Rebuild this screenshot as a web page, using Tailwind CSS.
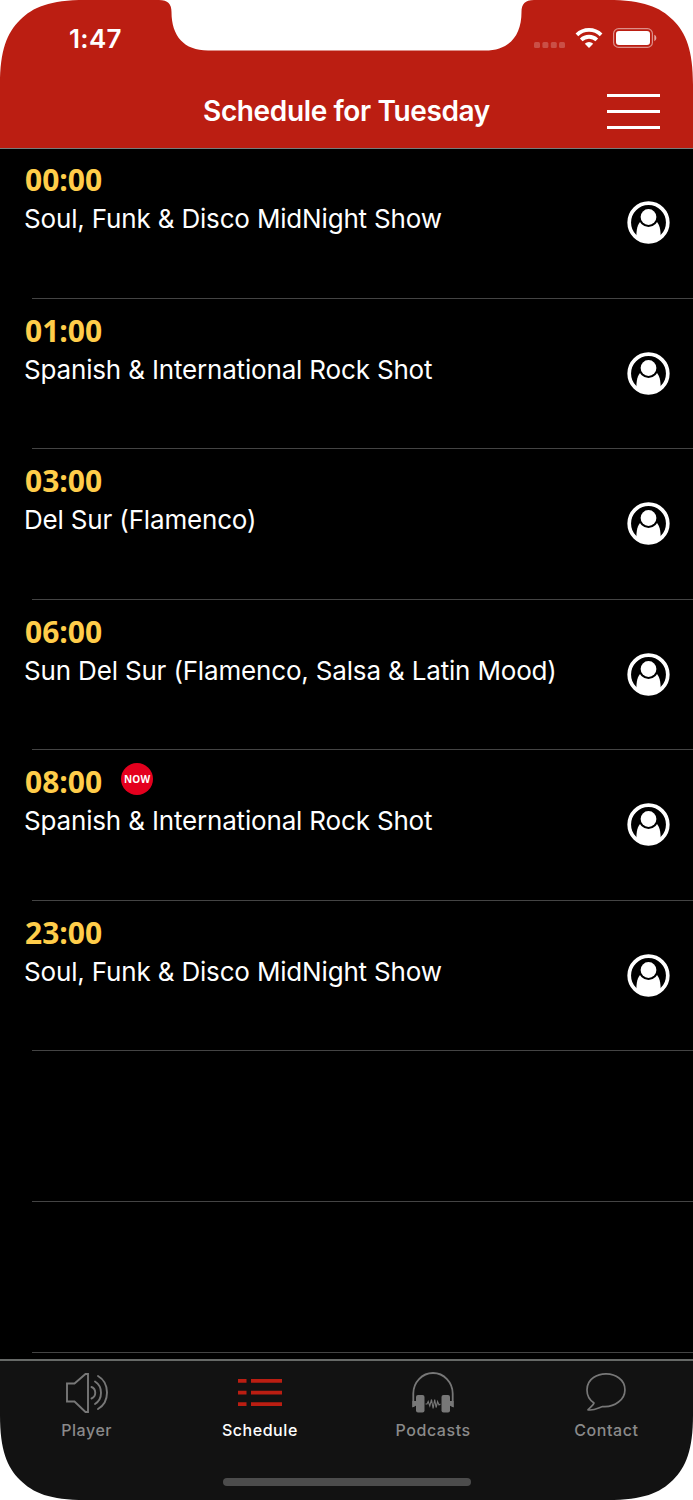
<!DOCTYPE html>
<html lang="en">
  <head>
    <meta charset="UTF-8" />
    <meta name="viewport" content="width=device-width, initial-scale=1.0" />
    <title>Schedule for Tuesday</title>
    <!-- Tailwind CSS CDN -->
    <script src="https://cdn.jsdelivr.net/npm/@tailwindcss/browser@4"></script>
  </head>
  <body class="bg-white">
    <div class="relative flex flex-col w-[693px] h-[1500px] overflow-hidden bg-black font-['Inter',sans-serif] text-white">
      <!-- Header -->
      <header class="shrink-0 h-[149px] bg-[#bb1e12] border-b border-[#777b79]">
        <div class="flex items-center justify-between h-[76px] pl-[69px] pr-[36px]">
          <span class="text-[26px] font-semibold tracking-[0.3px]">1:47</span>
          <div class="flex items-center gap-[10px]">
            <svg class="w-[32px] h-[20px]" viewBox="0 0 32 20" fill="#fff" fill-opacity=".22">
              <rect x="1" y="14" width="6" height="6" rx="1.5" />
              <rect x="9.4" y="14" width="6" height="6" rx="1.5" />
              <rect x="17.8" y="14" width="6" height="6" rx="1.5" />
              <rect x="26" y="14" width="6" height="6" rx="1.5" />
            </svg>
            <svg class="w-[28px] h-[20px]" viewBox="0 0 28 20" fill="none" stroke="#fff" stroke-width="3.8">
              <path d="M1.900 6.900a17.200 17.200 0 0 1 24.200 0" />
              <path d="M6.200 11.900a11.200 11.200 0 0 1 15.600 0" />
              <path d="M14 20l-4.200-4.300a6.200 6.200 0 0 1 8.400 0z" fill="#fff" stroke="none" />
            </svg>
            <svg class="w-[44px] h-[20px]" viewBox="0 0 44 20">
              <rect x="0.6" y="0.6" width="38.8" height="18.8" rx="5" fill="none" stroke="#fff" stroke-opacity=".5" stroke-width="1.200" />
              <rect x="3" y="3" width="34" height="14" rx="3" fill="#fff" />
              <path d="M41.300 6.800c2.700 1.200 2.700 5.200 0 6.400z" fill="#fff" fill-opacity=".6" />
            </svg>
          </div>
        </div>
        <div class="grid grid-cols-[1fr_auto_1fr] items-center h-[70px]">
          <h1 class="col-start-2 text-[28px] font-semibold tracking-[-0.370px] whitespace-nowrap">Schedule for Tuesday</h1>
          <button class="flex flex-col gap-[13px] w-[53px] mr-[33px] justify-self-end" aria-label="Menu">
            <span class="h-[3px] w-full bg-white"></span>
            <span class="h-[3px] w-full bg-white"></span>
            <span class="h-[3px] w-full bg-white"></span>
          </button>
        </div>
      </header>

      <svg class="hidden">
        <symbol id="person" viewBox="0 0 43 43">
          <circle cx="21.5" cy="21.5" r="19.300" fill="none" stroke="#fff" stroke-width="3.700" />
          <path d="M9.300 37.500c0-9 1-14.500 5-17.500h14.400c4 3 5 8.500 5 17.500C27 42.500 16 42.500 9.300 37.500z" fill="#fff" />
          <circle cx="21.500" cy="16" r="10" fill="#000" />
          <circle cx="21.500" cy="16" r="7.900" fill="#fff" />
        </symbol>
      </svg>

      <!-- Programme list -->
      <main class="h-[1210px] shrink-0 overflow-hidden">
        <ul class="tracking-[-0.170px]">
          <li class="flex justify-between h-[148.500px] pl-6 pr-[23px]">
            <div class="pt-[11px]">
              <p class="pl-px font-['Open_Sans',sans-serif] text-[30px] leading-[40px] font-bold tracking-normal text-[#ffcd4a]">00:00</p>
              <p class="text-[26px] leading-[37px] whitespace-nowrap">Soul, Funk &amp; Disco MidNight Show</p>
            </div>
            <svg class="w-[43px] h-[43px] mt-[52px]"><use href="#person" /></svg>
          </li>
          <li class="flex justify-between h-[150.600px] pl-6 pr-[23px] bg-[linear-gradient(#444,#444)] bg-no-repeat bg-[position:32px_0] bg-[size:661px_1px]">
            <div class="pt-[13px]">
              <p class="pl-px font-['Open_Sans',sans-serif] text-[30px] leading-[40px] font-bold tracking-normal text-[#ffcd4a]">01:00</p>
              <p class="text-[26px] leading-[37px] whitespace-nowrap">Spanish &amp; International Rock Shot</p>
            </div>
            <svg class="w-[43px] h-[43px] mt-[54px]"><use href="#person" /></svg>
          </li>
          <li class="flex justify-between h-[150.600px] pl-6 pr-[23px] bg-[linear-gradient(#444,#444)] bg-no-repeat bg-[position:32px_0] bg-[size:661px_1px]">
            <div class="pt-[13px]">
              <p class="pl-px font-['Open_Sans',sans-serif] text-[30px] leading-[40px] font-bold tracking-normal text-[#ffcd4a]">03:00</p>
              <p class="text-[26px] leading-[37px] whitespace-nowrap">Del Sur (Flamenco)</p>
            </div>
            <svg class="w-[43px] h-[43px] mt-[54px]"><use href="#person" /></svg>
          </li>
          <li class="flex justify-between h-[150.600px] pl-6 pr-[23px] bg-[linear-gradient(#444,#444)] bg-no-repeat bg-[position:32px_0] bg-[size:661px_1px]">
            <div class="pt-[13px]">
              <p class="pl-px font-['Open_Sans',sans-serif] text-[30px] leading-[40px] font-bold tracking-normal text-[#ffcd4a]">06:00</p>
              <p class="text-[26px] leading-[37px] whitespace-nowrap">Sun Del Sur (Flamenco, Salsa &amp; Latin Mood)</p>
            </div>
            <svg class="w-[43px] h-[43px] mt-[54px]"><use href="#person" /></svg>
          </li>
          <li class="flex justify-between h-[150.600px] pl-6 pr-[23px] bg-[linear-gradient(#444,#444)] bg-no-repeat bg-[position:32px_0] bg-[size:661px_1px]">
            <div class="pt-[13px]">
              <div class="flex h-[40px] gap-[19px]">
                <p class="pl-px font-['Open_Sans',sans-serif] text-[30px] leading-[40px] font-bold tracking-normal text-[#ffcd4a]">08:00</p>
                <span class="flex items-center justify-center mt-[1px] size-[32px] rounded-full bg-[#e4001e] font-['Open_Sans',sans-serif] text-[10px] font-bold tracking-[0.200px]">NOW</span>
              </div>
              <p class="text-[26px] leading-[37px] whitespace-nowrap">Spanish &amp; International Rock Shot</p>
            </div>
            <svg class="w-[43px] h-[43px] mt-[54px]"><use href="#person" /></svg>
          </li>
          <li class="flex justify-between h-[150.600px] pl-6 pr-[23px] bg-[linear-gradient(#444,#444)] bg-no-repeat bg-[position:32px_0] bg-[size:661px_1px]">
            <div class="pt-[13px]">
              <p class="pl-px font-['Open_Sans',sans-serif] text-[30px] leading-[40px] font-bold tracking-normal text-[#ffcd4a]">23:00</p>
              <p class="text-[26px] leading-[37px] whitespace-nowrap">Soul, Funk &amp; Disco MidNight Show</p>
            </div>
            <svg class="w-[43px] h-[43px] mt-[54px]"><use href="#person" /></svg>
          </li>
          <li class="h-[150.600px] bg-[linear-gradient(#444,#444)] bg-no-repeat bg-[position:32px_0] bg-[size:661px_1px]"></li>
          <li class="h-[150.600px] bg-[linear-gradient(#444,#444)] bg-no-repeat bg-[position:32px_0] bg-[size:661px_1px]"></li>
          <li class="h-[150.600px] bg-[linear-gradient(#444,#444)] bg-no-repeat bg-[position:32px_0] bg-[size:661px_1px]"></li>
        </ul>
      </main>

      <!-- Tab bar -->
      <footer class="flex flex-col items-center flex-1 bg-[#121212] border-t-2 border-[#666967]">
        <nav class="grid grid-cols-4 w-full h-[117px] text-[16px] leading-[24px] font-medium tracking-[0.550px] text-[#8a8a8a]">
          <a href="#" class="flex flex-col items-center pt-[9px]">
            <svg class="w-[46px] h-[46px] mb-[2px]" viewBox="0 0 46 46" fill="none" stroke="#777" stroke-width="1.900">
              <path d="M3 13.500h7.500L21.500 4H24v38h-2.500L10.500 31.500H3z" />
              <path d="M27.500 17c5 2 5 9.500 0 11.500M31 11.500c8 5 8 17.500 0 22.500M34 6c12 7 12 26 0 33" stroke-linecap="round" />
            </svg>
            <span>Player</span>
          </a>
          <a href="#" class="flex flex-col items-center pt-[9px] text-white">
            <svg class="w-[46px] h-[46px] mb-[2px]" viewBox="0 0 46 46" fill="#bb1e12">
              <path d="M1 9h8.500v3.700H1zM14 9h31v3.700H14zM1 20.700h8.500v3.700H1zM14 20.700h31v3.700H14zM1 32.200h8.500v3.700H1zM14 32.200h31v3.700H14z" />
            </svg>
            <span>Schedule</span>
          </a>
          <a href="#" class="flex flex-col items-center pt-[9px]">
            <svg class="w-[46px] h-[46px] mb-[2px]" viewBox="0 0 46 46" fill="#777">
              <path d="M3.300 37V23.500a19.700 20.500 0 0 1 39.400 0V37" fill="none" stroke="#777" stroke-width="1.800" />
              <rect x="6" y="25" width="8.500" height="17.500" rx="2" />
              <rect x="31.500" y="25" width="8.500" height="17.500" rx="2" />
              <path d="M2.400 31h4v4.500l-4 2zM43.600 31h-4v4.500l4 2z" />
              <path d="M15.500 34h1.500l1.200-2.500 1.600 4.500 1.700-6.500 1.600 9 1.600-9 1.400 8 1.500-6 1.400 3.500 1.500-1" fill="none" stroke="#777" stroke-width="1.100" />
            </svg>
            <span>Podcasts</span>
          </a>
          <a href="#" class="flex flex-col items-center pt-[9px]">
            <svg class="w-[46px] h-[46px] mb-[2px]" viewBox="0 0 46 46" fill="none" stroke="#777" stroke-width="1.700" stroke-linejoin="round">
              <path d="M11 33C1.500 27 2 13 10.500 7.500c7-5 18.500-5 25.500.5 8 6 8 18-.5 24-4.500 3.500-10.500 5-16 4.500-3.500 1-9 4.500-14.500 3.300 1.500-2.300 5.500-4.300 6-6.800z" />
            </svg>
            <span>Contact</span>
          </a>
        </nav>
        <div class="w-[248px] h-[8px] rounded-full bg-[#4c4c4c]"></div>
      </footer>

      <!-- Phone corners and notch -->
      <svg class="absolute inset-0 w-[693px] h-[1500px] pointer-events-none" viewBox="0 0 693 1500" fill="#fff">
        <path d="M0 0H85C50 0 33 7 20 20C7 33 0 50 0 85z" />
        <path d="M693 0H608C643 0 660 7 673 20C686 33 693 50 693 85z" />
        <path d="M0 1500H85C50 1500 33 1493 20 1480C7 1467 0 1450 0 1415z" />
        <path d="M693 1500H608C643 1500 660 1493 673 1480C686 1467 693 1450 693 1415z" />
        <path d="M159 0C168 0 171.500 4 171.500 12C171.500 36 184 50.500 208 50.500H485C509 50.500 521.500 36 521.500 12C521.500 4 525 0 534 0z" />
      </svg>
    </div>
  </body>
</html>
